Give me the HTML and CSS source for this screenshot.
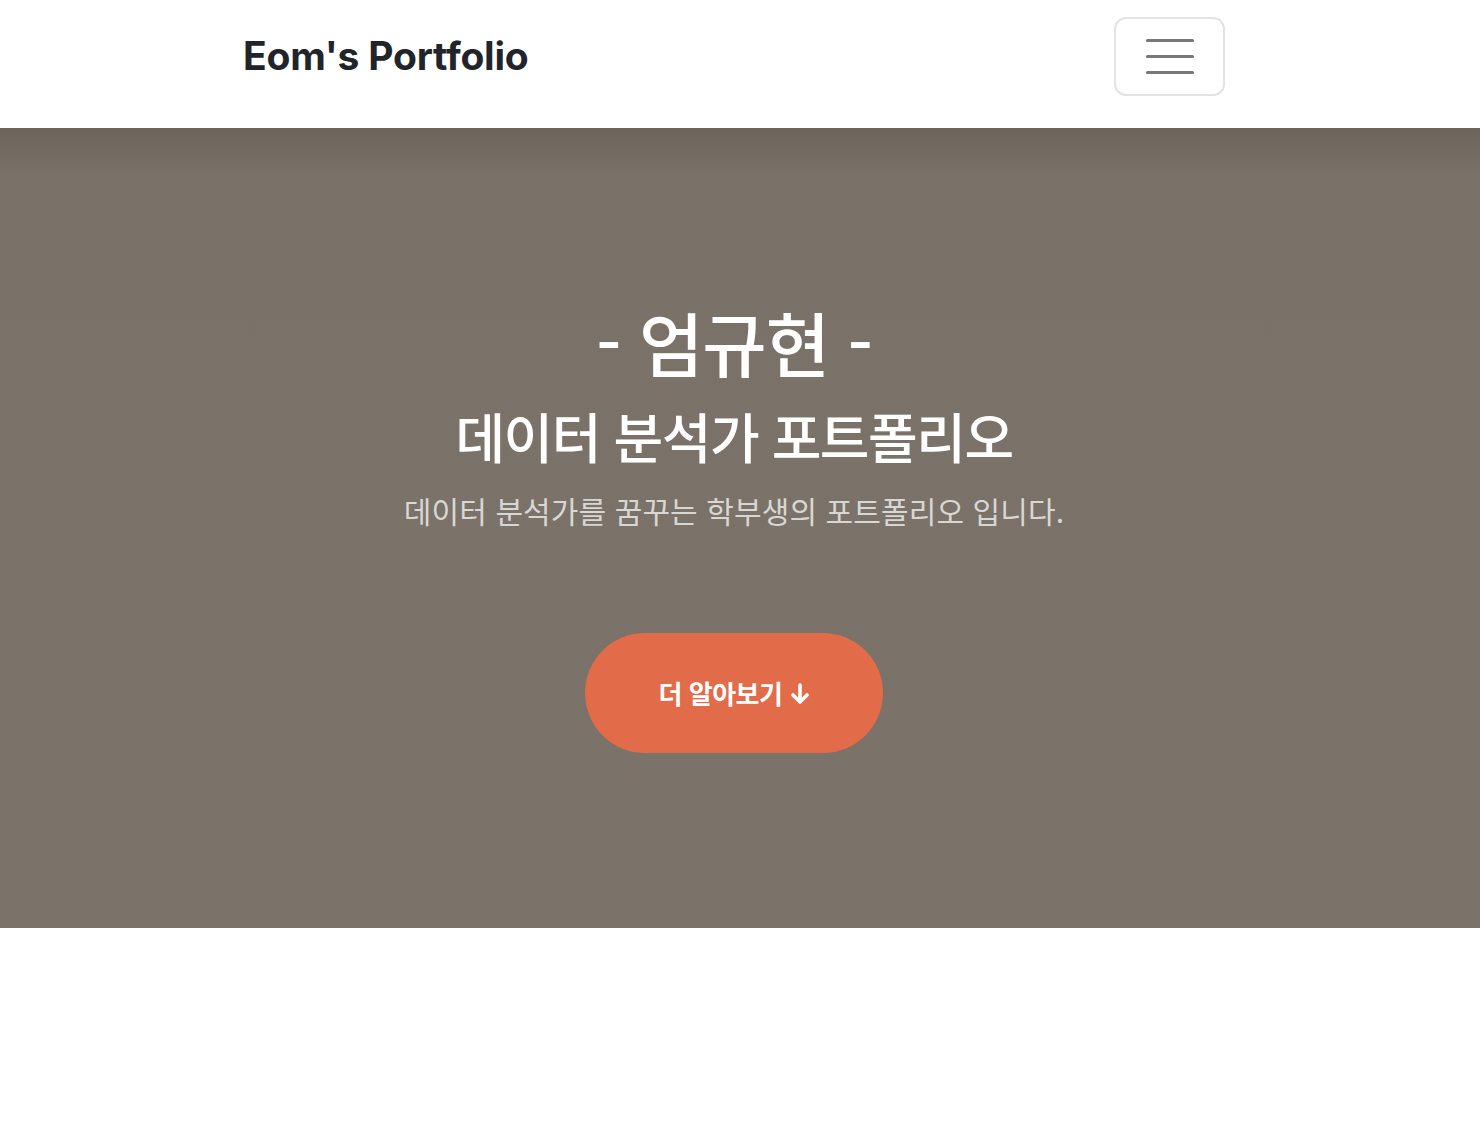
FILE: index.html
```html
<!DOCTYPE html>
<html lang="ko">
<head>
<meta charset="utf-8">
<title>Eom's Portfolio</title>
<link rel="stylesheet" href="styles.css">
</head>
<body>
<nav class="navbar">
  <div class="container nav-inner">
    <a class="brand" href="#">Eom's Portfolio</a>
    <button class="toggler" aria-label="menu">
      <span class="bar"></span><span class="bar"></span><span class="bar"></span>
    </button>
  </div>
</nav>
<header class="masthead">
  <div class="container hero-inner">
    <h1 class="hero-title">- 엄규현 -</h1>
    <h2 class="hero-sub">데이터 분석가 포트폴리오</h2>
    <p class="hero-text">데이터 분석가를 꿈꾸는 학부생의 포트폴리오 입니다.</p>
    <a class="btn-more" href="#about">더 알아보기
      <svg class="arrow" width="18" height="22" viewBox="0 0 18 22" aria-hidden="true">
        <path d="M9 2 V19 M2 12 L9 19 L16 12" fill="none" stroke="#fff" stroke-width="3.6" stroke-linecap="round" stroke-linejoin="round"/>
      </svg>
    </a>
  </div>
</header>
</body>
</html>
```
FILE: styles.css
```css
* { box-sizing: border-box; }
html, body { margin: 0; padding: 0; }
body {
  background: #fff;
  font-family: Inter, "Noto Sans CJK KR", sans-serif;
  color: #212529;
}
.container {
  width: 982px;
  margin-left: 243px;
}
.navbar {
  height: 128px;
  background: #fff;
  display: flex;
  align-items: center;
}
.nav-inner {
  display: flex;
  align-items: center;
  justify-content: space-between;
}
.brand {
  font-family: Inter, "Noto Sans CJK KR", sans-serif;
  font-weight: 700;
  font-size: 39px;
  letter-spacing: -0.2px;
  color: #212529;
  text-decoration: none;
  margin-top: -17px;
}
.toggler {
  width: 111px;
  height: 79px;
  margin-top: -16px;
  border: 2px solid #e3e3e3;
  border-radius: 12px;
  background: #fff;
  display: flex;
  flex-direction: column;
  align-items: center;
  justify-content: center;
  gap: 13px;
  padding: 0;
}
.bar {
  display: block;
  width: 48px;
  height: 3px;
  border-radius: 2px;
  background: #777;
}
.masthead {
  height: 800px;
  background: linear-gradient(to bottom, #6d645c 0px, #7a7168 50px, #7b7269 100%);
  display: flex;
  align-items: flex-start;
}
.hero-inner {
  display: flex;
  flex-direction: column;
  align-items: center;
  text-align: center;
  font-family: "Noto Sans CJK KR", sans-serif;
  color: #fff;
  padding-top: 172px;
}
.hero-title {
  margin: 0;
  font-size: 70px;
  font-weight: 500;
  line-height: 1.2;
  letter-spacing: -1px;
}
.hero-sub {
  margin: 0;
  margin-top: 20px;
  font-size: 54px;
  font-weight: 500;
  line-height: 1.2;
  letter-spacing: -1.5px;
}
.hero-text {
  margin: 20px 0 0;
  font-size: 30px;
  font-weight: 400;
  line-height: 1.4;
  letter-spacing: 0.1px;
  color: rgba(255,255,255,0.72);
}
.btn-more {
  margin-top: 102px;
  width: 298px;
  height: 120px;
  border-radius: 60px;
  background: #e26b4a;
  color: #fff;
  font-weight: 700;
  font-size: 26px;
  letter-spacing: -0.5px;
  text-decoration: none;
  display: flex;
  align-items: center;
  justify-content: center;
  gap: 9px;
}
.arrow {
  display: block;
  margin-top: 2px;
}
```
